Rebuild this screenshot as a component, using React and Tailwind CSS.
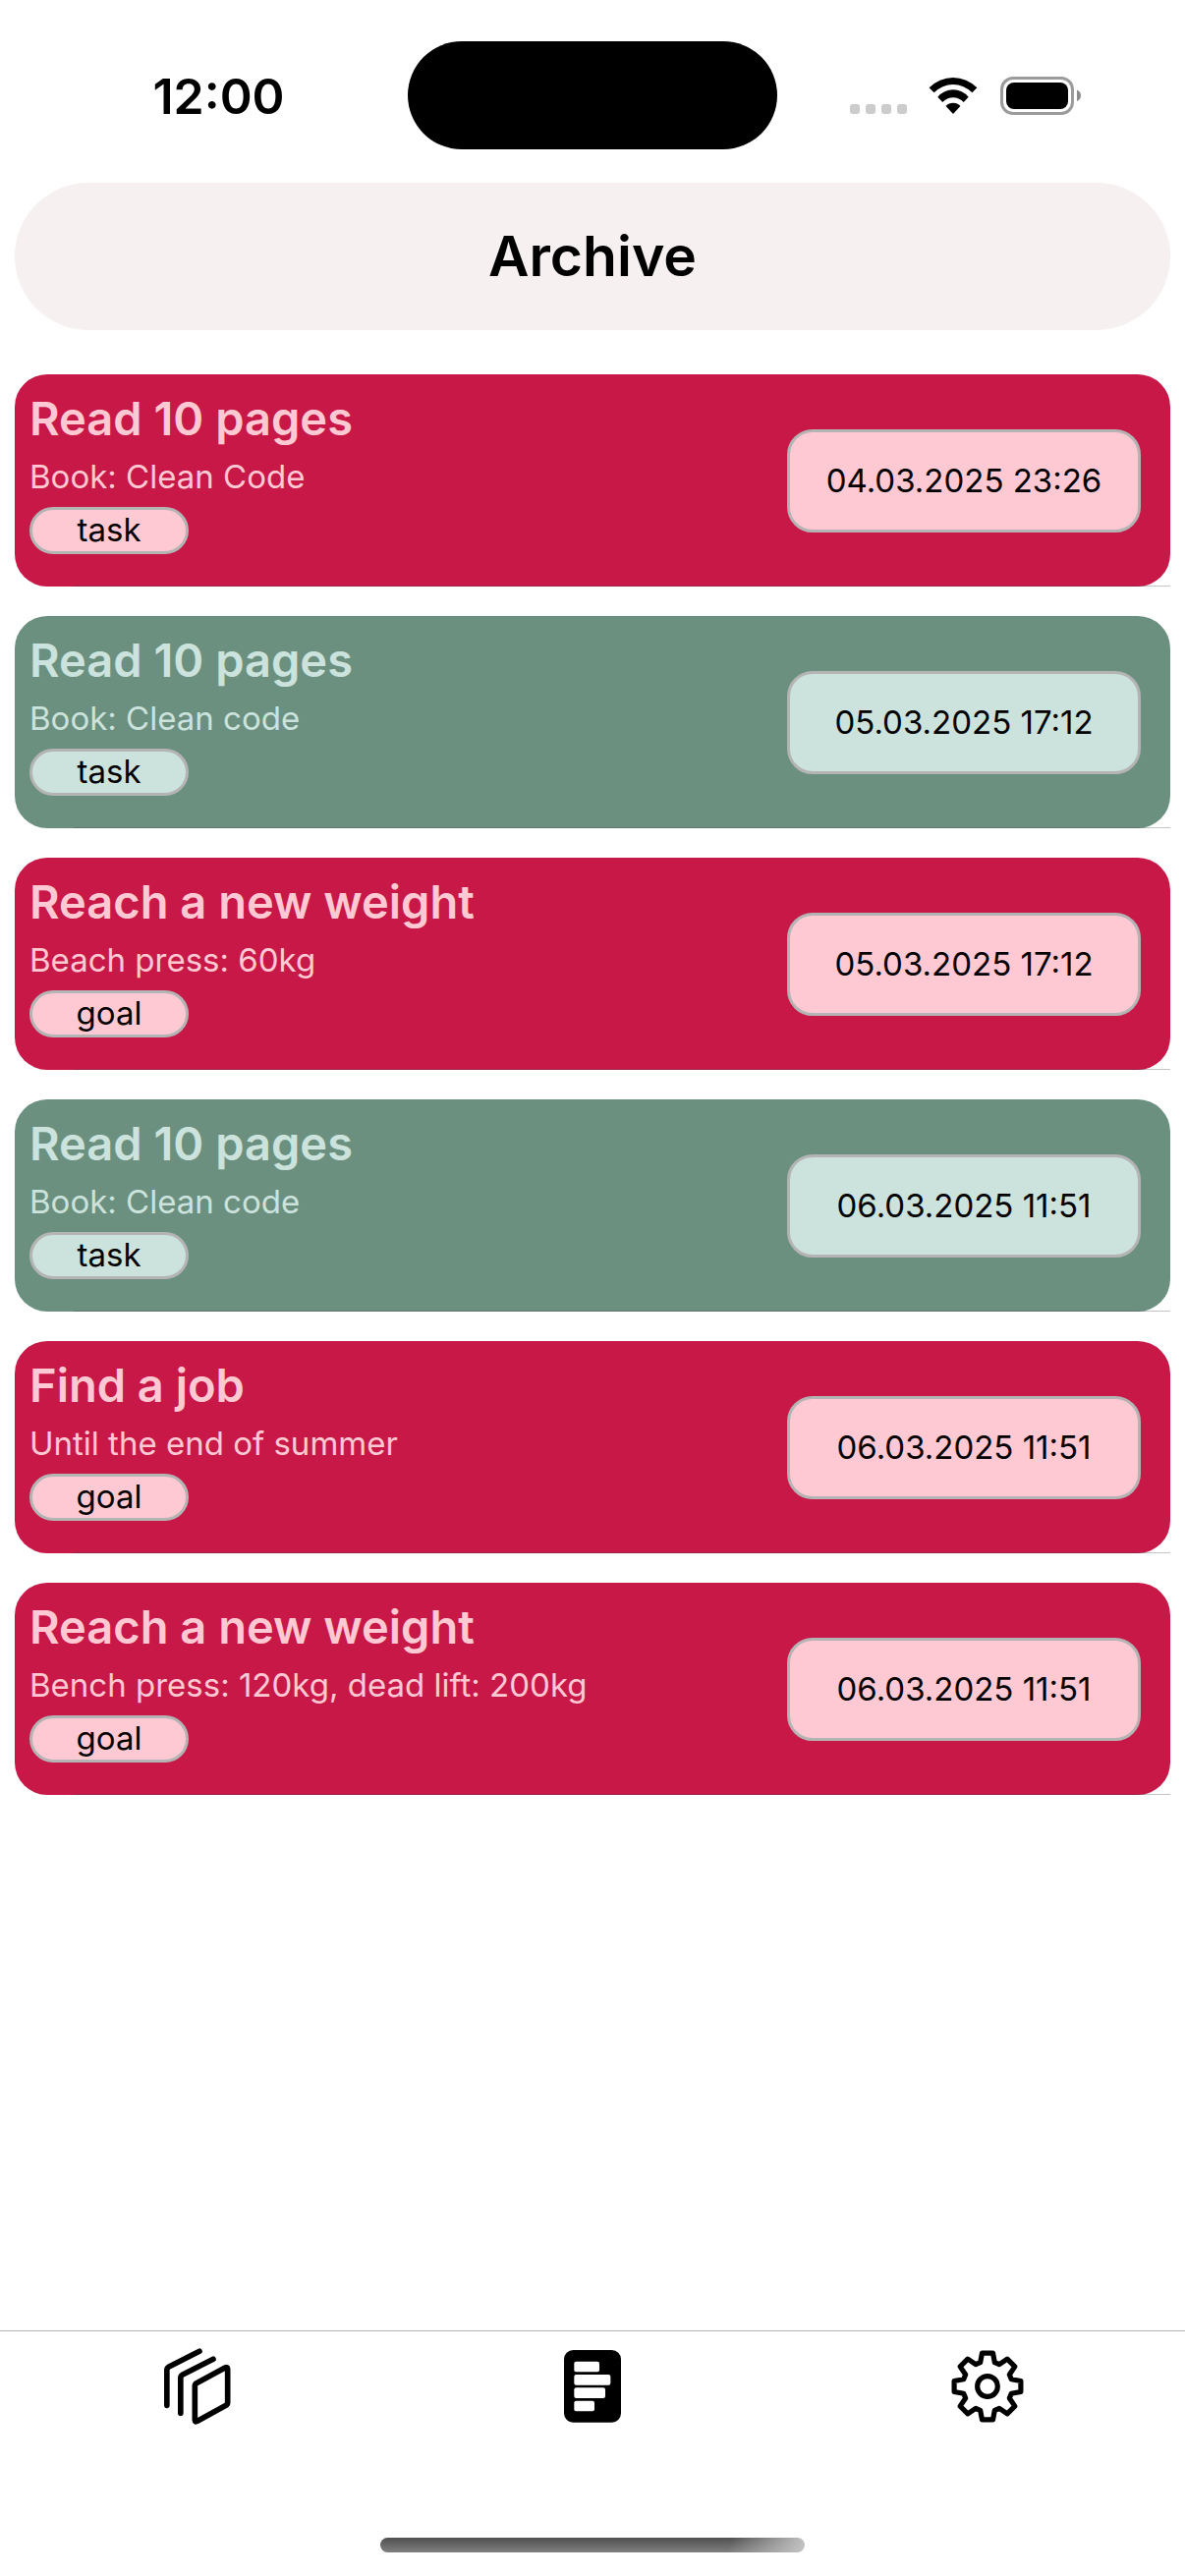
const entries = [
  { title: "Read 10 pages", note: "Book: Clean Code", kind: "task", date: "04.03.2025 23:26", done: false },
  { title: "Read 10 pages", note: "Book: Clean code", kind: "task", date: "05.03.2025 17:12", done: true },
  { title: "Reach a new weight", note: "Beach press: 60kg", kind: "goal", date: "05.03.2025 17:12", done: false },
  { title: "Read 10 pages", note: "Book: Clean code", kind: "task", date: "06.03.2025 11:51", done: true },
  { title: "Find a job", note: "Until the end of summer", kind: "goal", date: "06.03.2025 11:51", done: false },
  { title: "Reach a new weight", note: "Bench press: 120kg, dead lift: 200kg", kind: "goal", date: "06.03.2025 11:51", done: false },
];

function StatusBar() {
  return (
    <div className="grid grid-cols-[1fr_376px_1fr] items-center pt-[42px]">
      <div className="pt-[2px] pr-[2px] pl-8 text-center text-[50px] leading-[60px] font-semibold">12:00</div>
      <div className="h-[110px] rounded-full bg-black" />
      <div className="flex items-center justify-center pt-px pr-8">
        <svg className="mr-[22px]" width="58" height="39" viewBox="0 0 58 39" fill="#cccccc" aria-label="No signal">
          <rect x="0" y="28" width="10" height="10" rx="3" />
          <rect x="16" y="28" width="10" height="10" rx="3" />
          <rect x="32" y="28" width="10" height="10" rx="3" />
          <rect x="48" y="28" width="10" height="10" rx="3" />
        </svg>
        <svg className="mr-[23px]" width="50" height="39" viewBox="0 0 50 39" aria-label="Wi-Fi">
          <path d="M.6 11.3A34 34 0 0 1 49.4 11.3L44.4 16.3A26.8 26.8 0 0 0 5.6 16.3Z" />
          <path d="M9.3 20.7A20.4 20.4 0 0 1 40.7 20.7L35.7 26A14.5 14.5 0 0 0 14.3 26Z" />
          <path d="M17.6 30A10 10 0 0 1 32.4 30L25 38Z" />
        </svg>
        <svg width="82" height="39" viewBox="0 0 82 39" aria-label="Battery full">
          <rect x="1.5" y="1.5" width="72" height="36" rx="11.5" fill="none" stroke="#9b9b9b" strokeWidth="3" />
          <rect x="6" y="6" width="63" height="27" rx="8" />
          <path d="M78 13.5Q82 15 82 19.3Q82 23.6 78 25Z" fill="#8c8c8c" />
        </svg>
      </div>
    </div>
  );
}

function EntryCard({ entry }) {
  const badge = entry.done ? "bg-[#cbe3dc]" : "bg-[#ffc9d3]";
  return (
    <li
      className={
        "relative flex items-center justify-between rounded-[33px] py-[15px] pr-[30px] pl-[15px] " +
        (entry.done ? "bg-[#6c9080] text-[#cbe3dc]" : "bg-[#c71848] text-[#ffc9d3]")
      }
    >
      <div className="flex flex-col items-start pb-[18px]">
        <h2 className="text-[47px] leading-[60px] font-semibold">{entry.title}</h2>
        <p className="pt-[5px] pb-[7px] text-[33px] leading-[48px]">{entry.note}</p>
        <span
          className={
            "flex h-[48px] w-[162px] items-center justify-center rounded-full border-[3px] border-[#b4b4b4] pb-[2px] text-[33px] leading-[40px] text-black " +
            badge
          }
        >
          {entry.kind}
        </span>
      </div>
      <time
        className={
          "flex h-[105px] w-[360px] items-center justify-center rounded-[26px] border-[3px] border-[#b4b4b4] text-[33px] leading-[42px] text-black " +
          badge
        }
      >
        {entry.date}
      </time>
      <div className="absolute right-0 bottom-0 left-[60px] h-px bg-[#3c3c43]/30" />
    </li>
  );
}

function StackIcon() {
  return (
    <svg width="70" height="80" viewBox="78 88 210 240" fill="none" stroke="#000" strokeWidth="17" strokeLinecap="round" strokeLinejoin="round">
      <path d="M89.500 266V158q0-6 5-9L189 101" />
      <path d="M131.500 290V182q0-6 5-9L231 125" />
      <path d="M175 311V207q0-6 5-9L267 151q8-4 8 4V257q0 6-5 9L183 314q-8 4-8-3Z" />
    </svg>
  );
}

function ArchiveIcon() {
  return (
    <svg width="58" height="74" viewBox="102 97 174 222">
      <rect x="102" y="97" width="174" height="221" rx="28" />
      <g fill="#fff">
        <rect x="133" y="132" width="77" height="32" rx="6" />
        <rect x="133" y="172" width="111" height="32" rx="6" />
        <rect x="133" y="212" width="95" height="32" rx="6" />
        <rect x="133" y="252" width="62" height="32" rx="6" />
      </g>
    </svg>
  );
}

const gearPoints = Array.from({ length: 8 })
  .flatMap((_, tooth) =>
    [[-16.8, 76], [-9.2, 103], [9.2, 103], [16.8, 76]].map(([offset, radius]) => {
      const angle = ((tooth * 45 + offset) * Math.PI) / 180;
      return `${(radius * Math.sin(angle)).toFixed(1)},${(-radius * Math.cos(angle)).toFixed(1)}`;
    })
  )
  .join(" ");

function GearIcon() {
  return (
    <svg width="74" height="74" viewBox="-111 -111 222 222" fill="none" stroke="#000" strokeWidth="15.5" strokeLinejoin="round">
      <polygon points={gearPoints} />
      <circle r="31" />
    </svg>
  );
}

const tabs = [
  { label: "Tasks", Icon: StackIcon },
  { label: "Archive", Icon: ArchiveIcon },
  { label: "Settings", Icon: GearIcon },
];

export default function App() {
  return (
    <div className="flex min-h-screen flex-col bg-white font-[Inter,sans-serif] text-black">
      <StatusBar />
      <main className="flex grow flex-col gap-[45px] px-[15px] pt-[34px]">
        <h1 className="rounded-full bg-[#f6f0f0] py-[39px] text-center text-[57px] leading-[72px] font-semibold">
          Archive
        </h1>
        <ul className="flex flex-col gap-[30px]">
          {entries.map((entry, i) => (
            <EntryCard key={i} entry={entry} />
          ))}
        </ul>
      </main>
      <footer className="border-t border-[#b2b2b2] pb-6">
        <nav className="grid grid-cols-3">
          {tabs.map(({ label, Icon }) => (
            <button key={label} type="button" aria-label={label} className="flex h-[112px] items-center justify-center">
              <Icon />
            </button>
          ))}
        </nav>
        <div className="mx-auto mt-[98px] h-[15px] w-[432px] rounded-full bg-[linear-gradient(100deg,transparent_82%,#c4c4c4_100%),linear-gradient(#505050,#808080)]" />
      </footer>
    </div>
  );
}
